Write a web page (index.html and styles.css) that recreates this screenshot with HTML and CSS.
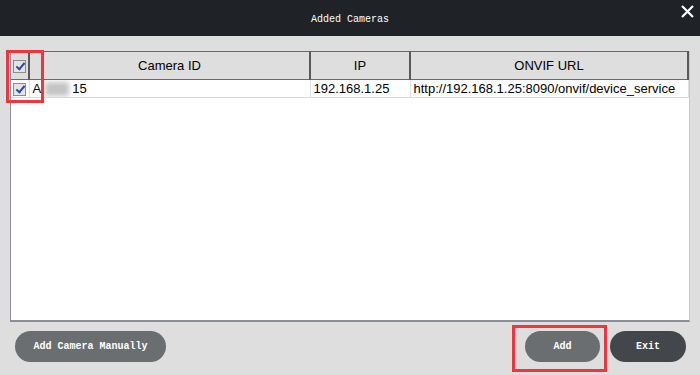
FILE: index.html
```html
<!DOCTYPE html>
<html>

<head>
    <meta name="viewport" content="width=device-width, initial-scale=1.0">
    <title>Added Cameras</title>
    <link rel="stylesheet" href="styles.css">
</head>

<body>

    <div class="titlebar">
        <span class="title">Added Cameras</span>
        <svg class="close" width="13" height="13" viewBox="0 0 13 13">
            <path d="M1 1 L12 12 M12 1 L1 12" stroke="#fff" stroke-width="2.2" fill="none" />
        </svg>
    </div>

    <div class="main">
        <div class="frame">
            <table class="cams">
                <thead>
                    <tr>
                        <th class="col-check"><span class="check"></span></th>
                        <th class="col-id">Camera ID</th>
                        <th class="col-ip">IP</th>
                        <th class="col-url">ONVIF URL</th>
                    </tr>
                </thead>
                <tbody>
                    <tr>
                        <td class="col-check"><span class="check"></span></td>
                        <td class="col-id">A<span class="blur"></span>15</td>
                        <td class="col-ip">192.168.1.25</td>
                        <td class="col-url">http://192.168.1.25:8090/onvif/device_service</td>
                    </tr>
                </tbody>
            </table>
            <div class="mark mark-check"></div>
        </div>

        <div class="actions">
            <button class="btn btn-manual">Add Camera Manually</button>
            <div class="right">
                <button class="btn btn-add">Add<span class="mark mark-add"></span></button>
                <button class="btn btn-exit">Exit</button>
            </div>
        </div>
    </div>

</body>

</html>
```

FILE: styles.css
```css
body {
    margin: 0;
    background: #dedede;
    width: 700px;
    height: 375px;
    overflow: hidden;
}

.titlebar {
    height: 36px;
    background: #1f2327;
    display: flex;
    align-items: center;
    justify-content: center;
    position: relative;
}

.title {
    color: #fff;
    font-family: "Liberation Mono", monospace;
    font-size: 10px;
    margin-top: 2px;
}

.close {
    position: absolute;
    right: 6px;
    top: 5px;
}

.main {
    padding: 15px 0 0 10px;
}

.frame {
    position: relative;
    width: 678px;
    height: 269px;
    background: #fff;
    border-left: 1px solid #8a8e9a;
    border-right: 1px solid #c8c8c8;
    border-bottom: 2px solid #8a8e9a;
}

.cams {
    border-collapse: collapse;
    width: 678px;
    table-layout: fixed;
    font-family: "Liberation Sans", Arial, sans-serif;
    font-size: 13px;
    color: #000;
}

.cams th {
    height: 27px;
    background: #dedede;
    font-weight: normal;
    border-top: 1px solid #6a6a6a;
    border-bottom: 1px solid #6a6a6a;
    border-right: 2px solid #5a5a5a;
    padding: 0;
}

.cams td {
    height: 17px;
    border-bottom: 1px solid #d8d8d8;
    border-right: 1px solid #e0e0e0;
    padding: 0 0 0 3px;
    white-space: nowrap;
    overflow: hidden;
}

.cams .col-check {
    width: 17px;
    padding: 0;
    text-align: center;
}

.cams .col-id {
    width: 279px;
}

.cams .col-ip {
    width: 98px;
}

.check {
    display: inline-block;
    width: 11px;
    height: 11px;
    border: 1px solid #8c8c8c;
    background: #e4e4e4;
    vertical-align: middle;
    position: relative;
}

.check::after {
    content: "";
    position: absolute;
    left: 4px;
    top: 0px;
    width: 3px;
    height: 7px;
    border-right: 2px solid #2b4aa0;
    border-bottom: 2px solid #2b4aa0;
    transform: rotate(40deg);
}

.blur {
    display: inline-block;
    background: #c4c4c4;
    width: 24px;
    height: 14px;
    vertical-align: middle;
    margin: 0 3px 0 4px;
    filter: blur(2.5px);
}

.mark {
    position: absolute;
    border: 3px solid #f0363a;
    pointer-events: none;
}

.mark-check {
    left: -5px;
    top: -1px;
    width: 32px;
    height: 47px;
}

.actions {
    display: flex;
    justify-content: space-between;
    align-items: center;
    margin-top: 9px;
    padding: 0 14px 0 5px;
}

.right {
    display: flex;
    gap: 10px;
}

.btn {
    height: 31px;
    border: none;
    border-radius: 16px;
    color: #fff;
    font-family: "Liberation Mono", monospace;
    font-size: 10px;
    font-weight: bold;
    padding: 0;
    position: relative;
}

.btn-manual {
    width: 151px;
    background: #6b6e71;
}

.btn-add {
    width: 75px;
    background: #6b6e71;
}

.btn-exit {
    width: 76px;
    background: #43464a;
}

.mark-add {
    left: -13px;
    top: -6px;
    width: 89px;
    height: 41px;
}
```
